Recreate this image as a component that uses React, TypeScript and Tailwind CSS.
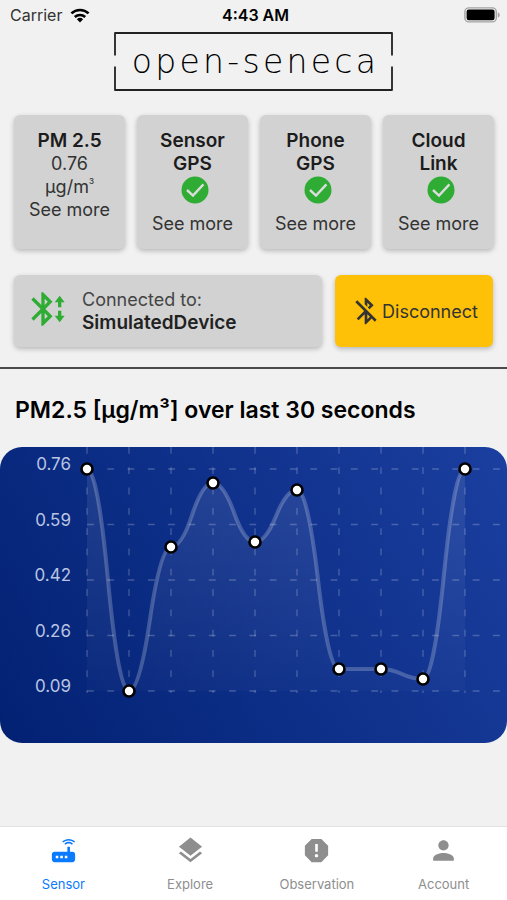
import type { ReactNode } from "react";
import { MdLayers, MdPerson, MdReport, MdRouter } from "react-icons/md";

function WifiIcon() {
  return (
    <svg viewBox="0 0 20 15" className="h-[15px] w-5" fill="none" stroke="#000" strokeWidth="2.6" aria-hidden="true">
      <path d="M1.4 5.4a12.4 12.4 0 0 1 17.2 0" />
      <path d="M4.8 9a7.6 7.6 0 0 1 10.4 0" />
      <path d="M10 14.4 6.9 11.3a4.5 4.5 0 0 1 6.2 0Z" fill="#000" stroke="none" />
    </svg>
  );
}

function BatteryIcon() {
  return (
    <svg viewBox="0 0 37 16" className="h-4 w-[37px]" aria-hidden="true">
      <rect x="0.9" y="0.9" width="31.4" height="14" rx="4" fill="none" stroke="#a3a3a3" strokeWidth="1.4" />
      <rect x="2.6" y="2.6" width="28" height="10.6" rx="2.2" fill="#000" />
      <path d="M33.8 5.4c2.6.6 2.6 4.4 0 5Z" fill="#a3a3a3" />
    </svg>
  );
}

function LogoFrame() {
  return (
    <svg viewBox="0 0 279 60" className="absolute inset-0 h-full w-full" fill="none" stroke="#222" strokeWidth="1.8" strokeLinejoin="round" aria-hidden="true">
      <path d="M1 23.500V1H278V23.500M1 34.500V58H278V34.500" />
    </svg>
  );
}

function CheckIcon() {
  return (
    <svg viewBox="0 0 28 28" className="size-7" aria-hidden="true">
      <circle cx="14" cy="14" r="13.500" fill="#2eac34" />
      <path d="M6 14l6 5.600L22.400 8.400" fill="none" stroke="#dcdcdc" strokeWidth="2.400" />
    </svg>
  );
}

function BluetoothTransferIcon() {
  return (
    <svg viewBox="0 0 24 24" className="mb-1 size-10 shrink-0 overflow-visible" fill="#2eac34" aria-hidden="true">
      <path d="M14.71 7.71L10.41 12L14.71 16.29L9 22H8V14.41L3.41 19L2 17.59L7.59 12L2 6.41L3.41 5L8 9.59V2H9L14.71 7.71M10 5.83V9.59L11.88 7.71L10 5.83M11.88 16.29L10 14.41V18.17L11.88 16.29M22 8H20V11H18V8H16L19 4L22 8M22 16L19 20L16 16H18V13H20V16H22Z" />
    </svg>
  );
}

function BluetoothOffIcon() {
  return (
    <svg viewBox="0 0 24 24" className="size-8 shrink-0" fill="#333" aria-hidden="true">
      <path d="M13 5.83L14.88 7.71L13.28 9.31L14.69 10.72L17.71 7.7L12 2H11V7.03L13 9.03M5.41 4L4 5.41L10.59 12L5 17.59L6.41 19L11 14.41V22H12L16.29 17.71L18.59 20L20 18.59M13 18.17V14.41L14.88 16.29" />
    </svg>
  );
}

function Card({ children }: { children: ReactNode }) {
  return (
    <button
      type="button"
      className="flex flex-1 flex-col items-center rounded-md bg-[#d2d2d2] py-[14px] text-[18px] leading-[23px] text-[#333] shadow-[0_2px_5px_rgba(0,0,0,0.24)]"
    >
      {children}
    </button>
  );
}

function StatusCard({ top, bottom }: { top: string; bottom: string }) {
  return (
    <Card>
      <span className="text-[19px] font-semibold text-[#1c1c1c]">{top}</span>
      <span className="text-[19px] font-semibold text-[#1c1c1c]">{bottom}</span>
      <span className="h-[37px] pt-px pl-1">
        <CheckIcon />
      </span>
      <span>See more</span>
    </Card>
  );
}

const points = [
  [87, 22],
  [129, 244],
  [171, 100],
  [213, 36],
  [255, 95],
  [297, 43],
  [339, 222],
  [381, 222],
  [423, 232],
  [465, 22],
];
const levels = ["0.76", "0.59", "0.42", "0.26", "0.09"];

function smoothPath() {
  let d = `M${points[0][0]} ${points[0][1]}`;
  for (let i = 0; i < points.length - 1; i++) {
    const [x1, y1] = points[i];
    const [x2, y2] = points[i + 1];
    const xm = (x1 + x2) / 2;
    const ym = (y1 + y2) / 2;
    d += ` Q${(xm + x1) / 2} ${y1} ${xm} ${ym} Q${(xm + x2) / 2} ${y2} ${x2} ${y2}`;
  }
  return d;
}

function Chart() {
  const line = smoothPath();
  return (
    <svg viewBox="0 0 507 296" className="block h-auto w-full rounded-[22px]" role="img" aria-label="PM2.5 over last 30 seconds">
      <defs>
        <linearGradient id="bg" x1="0" y1="296" x2="507" y2="0" gradientUnits="userSpaceOnUse">
          <stop offset="0" stopColor="#022173" />
          <stop offset="1" stopColor="#1b3fa0" />
        </linearGradient>
        <linearGradient id="area" x1="0" y1="0" x2="0" y2="296" gradientUnits="userSpaceOnUse">
          <stop offset="0" stopColor="#fff" stopOpacity="0.1" />
          <stop offset="1" stopColor="#fff" stopOpacity="0" />
        </linearGradient>
      </defs>
      <rect width="507" height="296" fill="url(#bg)" />
      <g stroke="#fff" strokeOpacity="0.22" strokeWidth="1.35" strokeDasharray="6.8 13.5">
        {levels.map((l, i) => (
          <line key={l} x1="87" x2="500" y1={22 + i * 55.5} y2={22 + i * 55.5} />
        ))}
        {points.map(([x]) => (
          <line key={x} x1={x} x2={x} y1="0" y2="246" />
        ))}
      </g>
      <path d={`${line} L465 244 L87 244 Z`} fill="url(#area)" />
      <path d={line} fill="none" stroke="#fff" strokeOpacity="0.22" strokeWidth="4" />
      {points.map(([x, y]) => (
        <circle key={x} cx={x} cy={y} r="5.5" fill="#fff" stroke="#000" strokeWidth="2.6" />
      ))}
      <g fill="#b9c4e2" fontSize="17" textAnchor="end">
        {levels.map((l, i) => (
          <text key={l} x="71" y={23 + i * 55.5}>
            {l}
          </text>
        ))}
      </g>
    </svg>
  );
}

function Tab({ icon, label, active }: { icon: ReactNode; label: string; active?: boolean }) {
  return (
    <a
      href={`#${label.toLowerCase()}`}
      className={`flex flex-1 flex-col items-center pt-2 text-[13px] leading-4 ${active ? "text-[#0a7aff]" : "text-[#8e8e8e]"}`}
    >
      {icon}
      <span className="mt-[10px]">{label}</span>
    </a>
  );
}

export default function App() {
  return (
    <div className="flex min-h-screen flex-col bg-[#f1f1f1] font-['Inter','Liberation_Sans',sans-serif] text-black">
      <header>
        <div className="grid h-[30px] grid-cols-3 items-center pr-[6px] pl-[10px] text-[16px]">
          <div className="flex items-center gap-2 text-[#333]">
            <span>Carrier</span>
            <WifiIcon />
          </div>
          <span className="text-center font-semibold">4:43 AM</span>
          <div className="flex justify-end">
            <BatteryIcon />
          </div>
        </div>
        <h1 className="relative mx-auto mt-[2px] flex h-[60px] w-[279px] items-center justify-center pb-[2px] pl-1 font-['DejaVu_Sans','Open_Sans',sans-serif] text-[33px] leading-none font-extralight tracking-widest text-black">
          <LogoFrame />
          open-seneca
        </h1>
      </header>

      <main className="flex-1">
        <section className="flex gap-3 pt-[23px] pr-[13px] pl-[14px]">
          <Card>
            <span className="text-[19px] font-semibold text-[#1c1c1c]">PM 2.5</span>
            <span>0.76</span>
            <span>
              µg/m<sup className="align-[5px] text-[8px] leading-none font-medium">3</sup>
            </span>
            <span>See more</span>
          </Card>
          <StatusCard top="Sensor" bottom="GPS" />
          <StatusCard top="Phone" bottom="GPS" />
          <StatusCard top="Cloud" bottom="Link" />
        </section>

        <section className="flex gap-[13px] px-[14px] pt-[26px] pb-5">
          <div className="flex h-[72px] flex-1 items-center gap-[14px] rounded-md bg-[#d2d2d2] pl-[14px] text-[18px] leading-[23px] text-[#444] shadow-[0_2px_5px_rgba(0,0,0,0.24)]">
            <BluetoothTransferIcon />
            <p>
              Connected to:
              <br />
              <strong className="text-[19px] font-semibold text-[#222]">SimulatedDevice</strong>
            </p>
          </div>
          <button
            type="button"
            className="flex h-[72px] w-[158px] items-center justify-center rounded-md bg-[#ffc107] text-[18px] text-[#333] shadow-[0_2px_5px_rgba(0,0,0,0.24)]"
          >
            <BluetoothOffIcon />
            Disconnect
          </button>
        </section>

        <hr className="border-t-2 border-[#4a4a4a]" />
        <h2 className="px-[15px] pt-[27px] pb-[23px] text-[23px] leading-7 font-semibold">PM2.5 [µg/m³] over last 30 seconds</h2>
        <Chart />
      </main>

      <nav className="flex h-[74px] border-t border-[#e2e2e2] bg-white">
        <Tab active icon={<MdRouter className="size-[31px]" />} label="Sensor" />
        <Tab icon={<MdLayers className="size-[31px]" />} label="Explore" />
        <Tab icon={<MdReport className="size-[31px]" />} label="Observation" />
        <Tab icon={<MdPerson className="size-[31px]" />} label="Account" />
      </nav>
    </div>
  );
}
